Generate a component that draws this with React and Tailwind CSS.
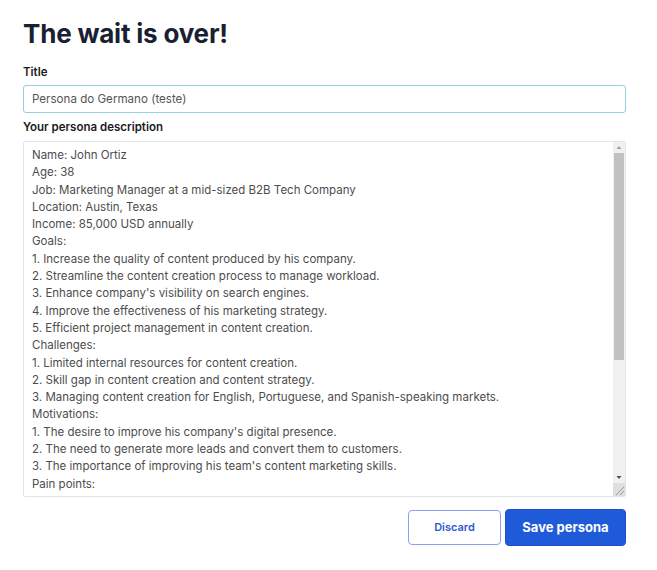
import React from 'react';

const description = `Name: John Ortiz
Age: 38
Job: Marketing Manager at a mid-sized B2B Tech Company
Location: Austin, Texas
Income: 85,000 USD annually
Goals:
1. Increase the quality of content produced by his company.
2. Streamline the content creation process to manage workload.
3. Enhance company's visibility on search engines.
4. Improve the effectiveness of his marketing strategy.
5. Efficient project management in content creation.
Challenges:
1. Limited internal resources for content creation.
2. Skill gap in content creation and content strategy.
3. Managing content creation for English, Portuguese, and Spanish-speaking markets.
Motivations:
1. The desire to improve his company's digital presence.
2. The need to generate more leads and convert them to customers.
3. The importance of improving his team's content marketing skills.
Pain points:
1. Time-consuming process of creating high-quality content.
2. Difficulty in finding skilled writers for multiple languages.
3. Inconsistent brand voice across different channels.
4. Lack of data to measure the impact of content.
Preferred channels:
1. LinkedIn
2. Industry blogs and newsletters
3. Webinars and online events
Objections:
1. Concerns about the cost of outsourcing content.`;

const Arrow = ({ down }) => (
  <svg width="12" height="11" viewBox="0 0 12 11" className="block">
    {down ? (
      <path d="M3.5 4h5L6 7z" fill="#505050" />
    ) : (
      <path d="M3.5 7h5L6 4z" fill="#a3a3a3" />
    )}
  </svg>
);

export default function App() {
  return (
    <div className="min-h-screen bg-white pl-[23px] pr-[31px] pt-[18px] font-['Inter',sans-serif]">
      <h1 className="text-[26px] font-bold leading-[32px] tracking-[-0.2px] text-[#1a1f33]">
        The wait is over!
      </h1>

      <label className="mt-[14px] block text-[11.5px] font-semibold leading-[16px] text-[#1b1b1b]">
        Title
      </label>
      <input
        type="text"
        defaultValue="Persona do Germano (teste)"
        className="mt-[5px] block h-[28px] w-full rounded-[3px] border border-[#94d0e0] px-[8px] text-[11.6px] text-[#555] outline-none"
      />

      <label className="mt-[6px] block text-[11.5px] font-semibold leading-[16px] text-[#1b1b1b]">
        Your persona description
      </label>
      <div className="mt-[6px] flex h-[356px] w-full overflow-hidden rounded-[2px] border border-[#e1e5eb]">
        <div className="flex-1 pb-[4px]">
          <textarea
            defaultValue={description}
            className="block h-full w-full resize-none overflow-hidden pl-[8px] pt-[5px] text-[11.5px] leading-[17.3px] text-[#4d4d4d] outline-none"
          />
        </div>
        <div className="flex w-[12px] flex-col bg-[#f1f1f1]">
          <Arrow />
          <div className="flex-1 px-[1px]">
            <div className="h-[207px] bg-[#c1c1c1]" />
          </div>
          <Arrow down />
          <div className="h-[13px] bg-[#dedede]">
            <svg width="12" height="13" viewBox="0 0 12 13" className="block">
              <path d="M11 4L3 12M11 8L7 12" stroke="#9a9a9a" strokeWidth="1" />
            </svg>
          </div>
        </div>
      </div>

      <div className="mt-[13px] flex justify-end gap-[4px]">
        <button
          type="button"
          className="h-[35px] w-[93px] rounded-[4px] border border-[#86a4e6] bg-white text-[11px] font-semibold text-[#2e5bd0]"
        >
          Discard
        </button>
        <button
          type="button"
          className="h-[37px] w-[121px] -translate-y-[1px] rounded-[4px] border border-[#1a50c8] bg-[#1f5bd8] text-[13px] font-bold text-white"
        >
          Save persona
        </button>
      </div>
    </div>
  );
}
